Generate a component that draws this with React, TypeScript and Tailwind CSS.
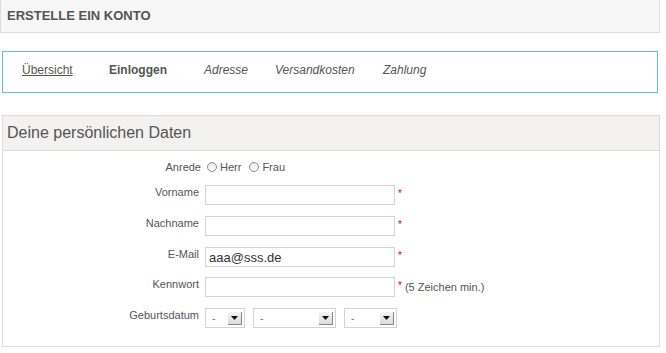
import React from "react";

const font = { fontFamily: '"Liberation Sans", Arial, sans-serif' };

function Field({ label, children }: { label: string; children: React.ReactNode }) {
  return (
    <div className="flex items-start">
      <label className="w-[202px] pr-[6px] text-right text-[11px] leading-[14px] text-[#555]">{label}</label>
      {children}
    </div>
  );
}

function TextInput({ value = "" }: { value?: string }) {
  return (
    <input
      type="text"
      defaultValue={value}
      className="h-[20px] w-[190px] border border-[#d4d4d4] bg-white px-[3px] text-[13px] text-[#333] outline-none"
    />
  );
}

function Required() {
  return <span className="ml-[3px] mt-[3px] text-[10px] leading-[12px] text-[#e0001a]">*</span>;
}

function Select({ width }: { width: string }) {
  return (
    <div className={`relative flex h-[20px] ${width} items-center border border-[#d4d4d4] bg-white pl-[6px] text-[11px] text-[#a86a3c]`}>
      <span className="leading-[18px]">-</span>
      {/* arrow button */}
      <div className="pointer-events-none absolute right-[2px] top-[3px] flex h-[13px] w-[14px] items-center justify-center border-r border-b border-[#888] bg-gradient-to-b from-[#f4f4f4] to-[#dcdcdc]">
        <svg width="7" height="4" viewBox="0 0 7 4">
          <path d="M0 0h7L3.5 4z" fill="#111" />
        </svg>
      </div>
    </div>
  );
}

function Radio({ label }: { label: string }) {
  return (
    <label className="flex items-center text-[11px] text-[#555]">
      <span className="mr-[3px] inline-block h-[10px] w-[10px] rounded-full border border-[#8a8a8a] bg-gradient-to-b from-[#e8e8e8] to-white" />
      {label}
    </label>
  );
}

export default function App() {
  return (
    <div className="w-[666px] h-[353px] bg-white" style={font}>
      {/* Title bar */}
      <div className="flex h-[33px] w-[660px] items-center border border-t-0 border-[#dddddd] bg-[#f7f7f7] pl-[6px]">
        <h1 className="text-[13px] font-bold text-[#555]">ERSTELLE EIN KONTO</h1>
      </div>

      {/* Checkout steps */}
      <nav className="ml-[2px] mt-[18px] flex h-[42px] w-[656px] items-center border border-[#62c3c9] pb-[4px] pl-[19px] text-[12px] text-[#555]">
        <a className="w-[87px] underline">Übersicht</a>
        <span className="w-[95px] font-bold">Einloggen</span>
        <span className="w-[71px] italic">Adresse</span>
        <span className="w-[108px] italic">Versandkosten</span>
        <span className="italic">Zahlung</span>
      </nav>

      {/* Personal data */}
      <section className="ml-[2px] mt-[22px] w-[658px] border border-[#dddddd] pb-[18px]">
        <div className="flex h-[35px] items-center border-b border-[#dddddd] bg-[#f3f2f0] pl-[4px]">
          <h2 className="text-[16px] text-[#555]">Deine persönlichen Daten</h2>
        </div>

        <div className="flex flex-col pt-[9px]">
          <div className="flex h-[14px] items-center">
            <span className="w-[202px] pr-[4px] text-right text-[11px] text-[#555]">Anrede</span>
            <div className="flex gap-[8px] pl-[2px]">
              <Radio label="Herr" />
              <Radio label="Frau" />
            </div>
          </div>

          <div className="mt-[11px]">
            <Field label="Vorname">
              <TextInput />
              <Required />
            </Field>
          </div>
          <div className="mt-[11px]">
            <Field label="Nachname">
              <TextInput />
              <Required />
            </Field>
          </div>
          <div className="mt-[11px]">
            <Field label="E-Mail">
              <TextInput value="aaa@sss.de" />
              <Required />
            </Field>
          </div>
          <div className="mt-[10px]">
            <Field label="Kennwort">
              <TextInput />
              <Required />
              <span className="ml-[3px] mt-[3px] text-[11px] leading-[14px] text-[#555]">(5 Zeichen min.)</span>
            </Field>
          </div>
          <div className="mt-[11px]">
            <Field label="Geburtsdatum">
              <div className="flex gap-[8px]">
                <Select width="w-[40px]" />
                <Select width="w-[83px]" />
                <Select width="w-[53px]" />
              </div>
            </Field>
          </div>
        </div>
      </section>
    </div>
  );
}
